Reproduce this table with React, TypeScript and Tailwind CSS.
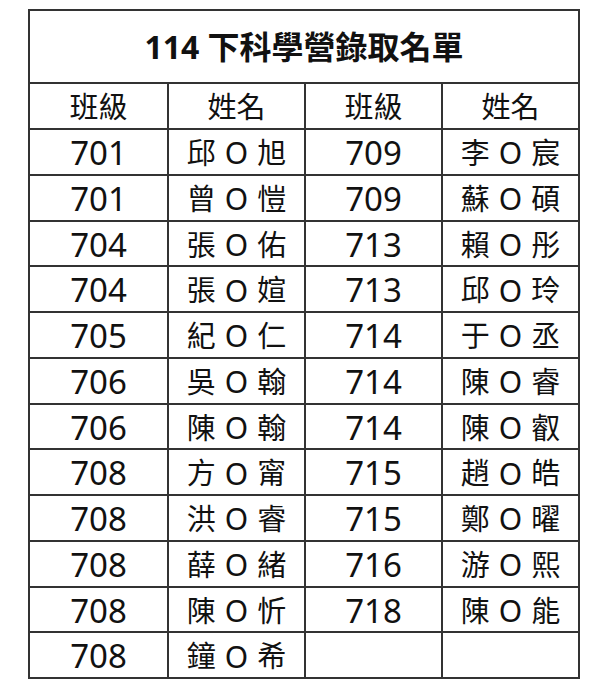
const rows: [string, string, string, string][] = [
  ["701", "邱旭", "709", "李宸"],
  ["701", "曾愷", "709", "蘇碩"],
  ["704", "張佑", "713", "賴彤"],
  ["704", "張媗", "713", "邱玲"],
  ["705", "紀仁", "714", "于丞"],
  ["706", "吳翰", "714", "陳睿"],
  ["706", "陳翰", "714", "陳叡"],
  ["708", "方甯", "715", "趙皓"],
  ["708", "洪睿", "715", "鄭曜"],
  ["708", "薛緒", "716", "游熙"],
  ["708", "陳忻", "718", "陳能"],
  ["708", "鐘希", "", ""],
];

const font = { fontFamily: '"Noto Sans", "Noto Sans CJK TC", sans-serif' };

const Cell = ({ children, first, num }: { children?: React.ReactNode; first?: boolean; num?: boolean }) => (
  <div
    className={`flex items-center justify-center border-t-2 border-[#333] pt-[2px] text-[#111] ${
      first ? "" : "border-l-2"
    } ${num ? "text-[33px]" : "text-[29px]"}`}
  >
    {children}
  </div>
);

// 名字中間的 O 比較大、左右留白
const Name = ({ v }: { v: string }) =>
  v ? (
    <>
      {v[0]}
      <span className="mx-[9px] text-[30px]">O</span>
      {v[1]}
    </>
  ) : null;

export default function App() {
  return (
    <div className="min-h-[700px] bg-white pl-[28px] pt-[9px]" style={font}>
      <div className="w-[552px] border-2 border-[#333]">
        <div className="flex h-[71px] items-center justify-center text-[32px] font-bold text-[#111]">
          114 下科學營錄取名單
        </div>
        <div className="grid grid-cols-4 grid-rows-[46px_repeat(12,45.75px)]">
          <Cell first>班級</Cell>
          <Cell>姓名</Cell>
          <Cell>班級</Cell>
          <Cell>姓名</Cell>
          {rows.map((r, i) => (
            <>
              <Cell key={`a${i}`} first num>{r[0]}</Cell>
              <Cell key={`b${i}`}><Name v={r[1]} /></Cell>
              <Cell key={`c${i}`} num>{r[2]}</Cell>
              <Cell key={`d${i}`}><Name v={r[3]} /></Cell>
            </>
          ))}
        </div>
      </div>
    </div>
  );
}
